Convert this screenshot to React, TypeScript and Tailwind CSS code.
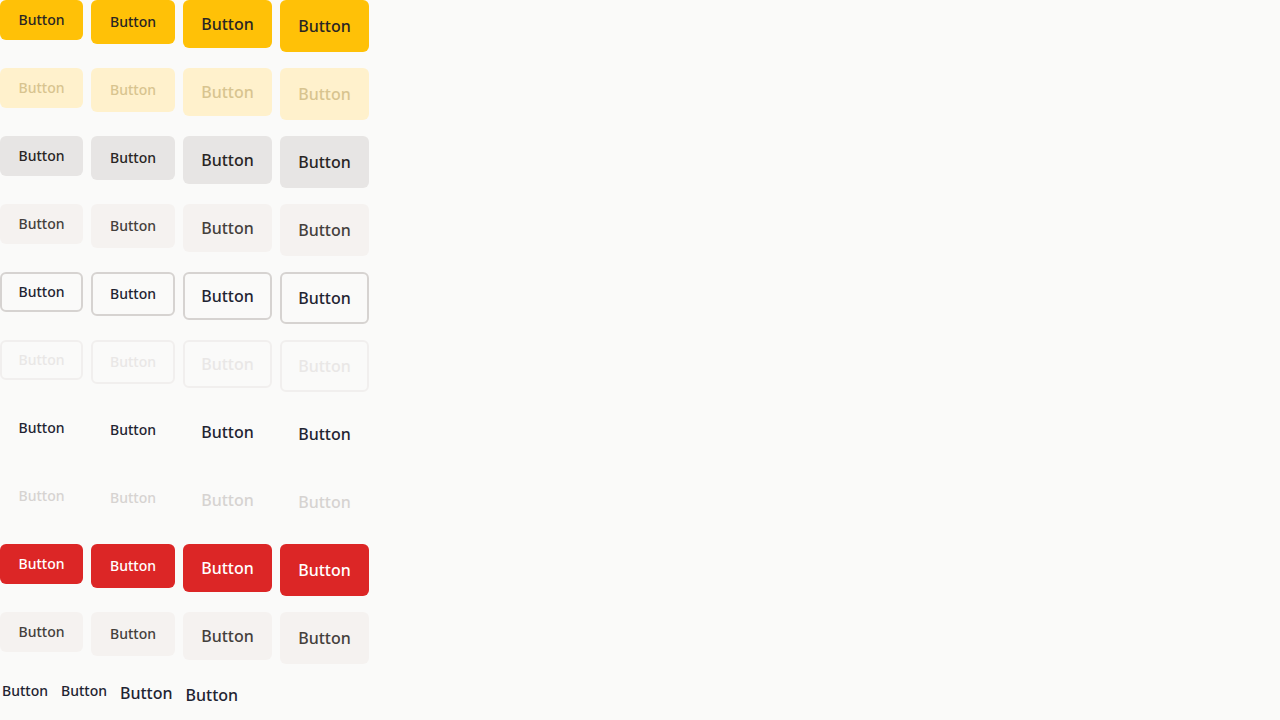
import React from 'react'

type Variant =
   | 'primary'
   | 'primaryDisabled'
   | 'secondary'
   | 'soft'
   | 'outline'
   | 'outlineDisabled'
   | 'ghost'
   | 'ghostDisabled'
   | 'danger'
   | 'muted'

const variants: Record<Variant, string> = {
   primary: 'bg-[#ffc107] text-[#292524]',
   primaryDisabled: 'bg-[#fff1cc] text-[#d8c48f]',
   secondary: 'bg-[#e7e5e4] text-[#292524]',
   soft: 'bg-[#f5f2f0] text-[#44403c]',
   outline: 'border-2 border-[#d6d3d1] text-[#1f2432]',
   outlineDisabled: 'border-2 border-[#f1efee] text-[#e9e7e6]',
   ghost: 'text-[#1f2432]',
   ghostDisabled: 'text-[#d6d3d1]',
   danger: 'bg-[#dc2626] text-white',
   muted: 'bg-[#f5f2f0] text-[#44403c]',
}

const sizes = [
   'h-10 w-[83px] text-sm',
   'h-11 w-[84px] text-sm',
   'h-12 w-[89px] text-base',
   'h-[52px] w-[89px] text-base',
]

const rows: Variant[] = [
   'primary',
   'primaryDisabled',
   'secondary',
   'soft',
   'outline',
   'outlineDisabled',
   'ghost',
   'ghostDisabled',
   'danger',
   'muted',
]

const linkSizes = [
   'h-[22px] text-sm',
   'h-[22px] text-sm',
   'h-[26px] text-base',
   'h-[30px] text-base',
]

export default function App() {
   return (
      <div className="min-h-screen bg-[#fafaf9] font-['Noto_Sans',sans-serif]">
         <div className="flex flex-col gap-4">
            {rows.map((v) => (
               <div key={v} className="flex items-start gap-2">
                  {sizes.map((s, i) => (
                     <button
                        key={i}
                        className={`flex items-center justify-center rounded-md font-medium ${s} ${variants[v]}`}
                     >
                        Button
                     </button>
                  ))}
               </div>
            ))}
            <div className="flex items-start gap-[9px]">
               {linkSizes.map((s, i) => (
                  <button
                     key={i}
                     className={`flex items-center justify-center px-[2px] font-medium text-[#1f2432] ${s}`}
                  >
                     Button
                  </button>
               ))}
            </div>
         </div>
      </div>
   )
}
